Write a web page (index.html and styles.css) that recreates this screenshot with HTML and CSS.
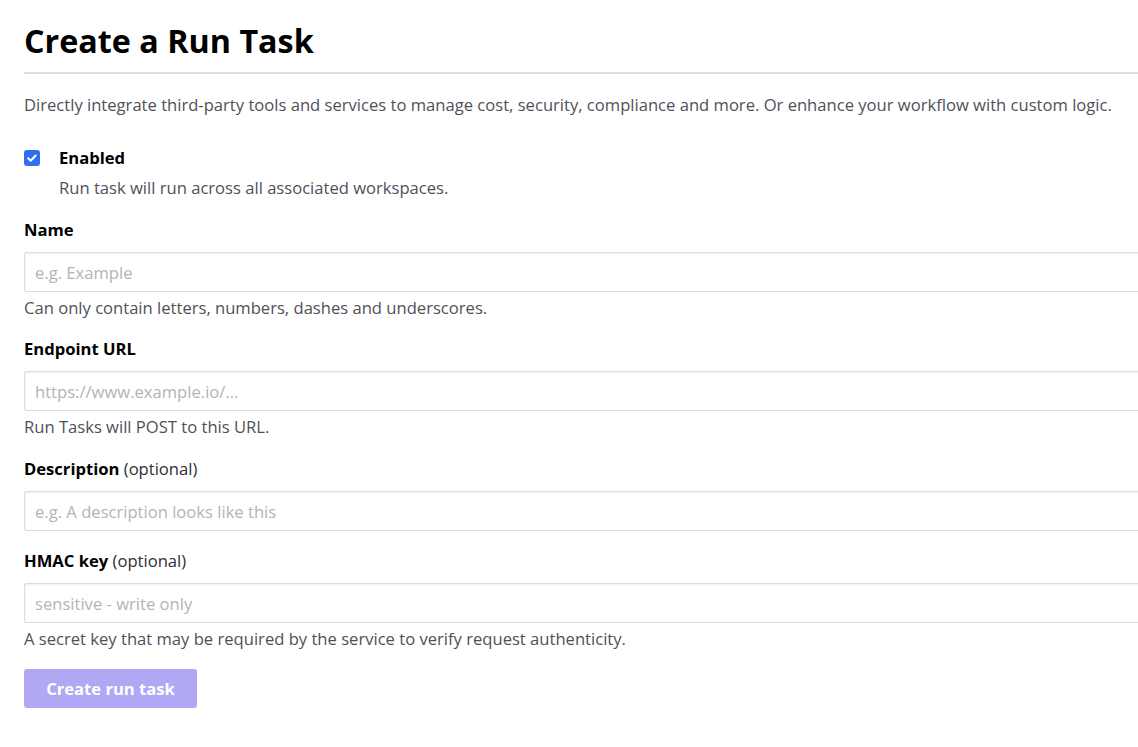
FILE: index.html
```html
<!DOCTYPE html>
<html lang="en">
<head>
<meta charset="utf-8">
<title>Create a Run Task</title>
<link rel="stylesheet" href="styles.css">
</head>
<body>
<main class="page">
  <h1 class="title">Create a Run Task</h1>
  <p class="intro">Directly integrate third-party tools and services to manage cost, security, compliance and more. Or enhance your workflow with custom logic.</p>

  <form class="form">
    <div class="check-field">
      <label class="check-row">
        <span class="checkbox" aria-hidden="true">
          <svg viewBox="0 0 16 16" width="16" height="16"><path d="M4.2 8.3l2.5 2.5 5-5.3" fill="none" stroke="#fff" stroke-width="2" stroke-linecap="round" stroke-linejoin="round"/></svg>
        </span>
        <span class="check-label">Enabled</span>
      </label>
      <p class="check-help">Run task will run across all associated workspaces.</p>
    </div>

    <div class="field field-tight">
      <label class="label" for="name">Name</label>
      <input class="input" id="name" type="text" placeholder="e.g. Example">
      <p class="help">Can only contain letters, numbers, dashes and underscores.</p>
    </div>

    <div class="field">
      <label class="label" for="url">Endpoint URL</label>
      <input class="input" id="url" type="text" placeholder="https://www.example.io/...">
      <p class="help">Run Tasks will POST to this URL.</p>
    </div>

    <div class="field">
      <label class="label" for="desc">Description <span class="optional">(optional)</span></label>
      <input class="input" id="desc" type="text" placeholder="e.g. A description looks like this">
    </div>

    <div class="field">
      <label class="label" for="hmac">HMAC key <span class="optional">(optional)</span></label>
      <input class="input" id="hmac" type="password" placeholder="sensitive - write only">
      <p class="help">A secret key that may be required by the service to verify request authenticity.</p>
    </div>

    <button class="button" type="button" disabled>Create run task</button>
  </form>
</main>
</body>
</html>
```

FILE: styles.css
```css
html, body {
  margin: 0;
  padding: 0;
  background: #ffffff;
  overflow: hidden;
}

body {
  font-family: "Open Sans", "Noto Sans", sans-serif;
  font-size: 16.6px;
  line-height: 24px;
  color: #000;
}

.page {
  width: 1160px;
  padding: 18px 0 0 24px;
}

.title {
  margin: 0;
  font-size: 32.3px;
  line-height: 44px;
  font-weight: 700;
  color: #000;
  padding-bottom: 10px;
  border-bottom: 2px solid #dcdde3;
}

.intro {
  margin: 19px 0 0;
  color: #4f5159;
}

.form {
  margin-top: 29px;
}

.check-row {
  display: flex;
  align-items: center;
  gap: 19px;
}

.checkbox {
  width: 16px;
  height: 16px;
  border-radius: 3px;
  background: #2d6ef2;
  display: flex;
}

.check-label {
  font-weight: 700;
}

.check-help {
  margin: 6px 0 0 35px;
  color: #4f5159;
}

.check-field {
  margin-bottom: 18px;
}

.field {
  margin-bottom: 18px;
}

.field-tight {
  margin-bottom: 17px;
}

.label {
  display: block;
  font-weight: 700;
  margin-bottom: 10px;
}

.optional {
  font-weight: 400;
  color: #2c2e33;
}

.input {
  display: block;
  box-sizing: border-box;
  width: 100%;
  height: 40px;
  margin: 0;
  padding: 0 10px;
  border: 1px solid #dbdbe1;
  border-radius: 2px;
  box-shadow: inset 0 1px 2px rgba(30, 30, 60, 0.08);
  font: inherit;
  color: #000;
  background: #fff;
}

.input::placeholder {
  color: #b4b3b8;
}

.help {
  margin: 4px 0 0;
  color: #4f5159;
}

.button {
  display: block;
  margin-top: 3px;
  width: 173px;
  height: 39px;
  padding: 0;
  border: none;
  border-radius: 3px;
  background: #b0a8f4;
  color: #fff;
  font: inherit;
  font-weight: 700;
  cursor: not-allowed;
}
```
